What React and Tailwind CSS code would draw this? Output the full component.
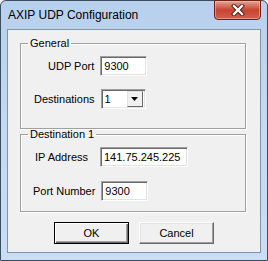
import React from 'react';

const sunken =
  "bg-white border border-t-[#a0a0a0] border-l-[#a0a0a0] border-r-white border-b-white shadow-[inset_1px_1px_0_#696969,inset_-1px_-1px_0_#e3e3e3]";

const TextBox = ({ value, width }) => (
  <div className={`${sunken} h-[20px] ${width} flex items-center pl-[3px] text-black`}>
    {value}
  </div>
);

const Button = ({ children, isDefault }) => (
  <button
    className={`w-[75px] h-[22px] bg-[#f0f0f0] text-black flex items-center justify-center ${
      isDefault
        ? 'border border-black shadow-[inset_1px_1px_0_#fff,inset_-1px_-1px_0_#696969,inset_-2px_-2px_0_#a0a0a0]'
        : 'border border-t-white border-l-white border-r-[#696969] border-b-[#696969] shadow-[inset_-1px_-1px_0_#a0a0a0,inset_1px_1px_0_#e3e3e3]'
    }`}
  >
    {children}
  </button>
);

const App = () => {
  return (
    <div className="w-[268px] h-[261px] bg-[#f0f0f0]">
      {/* Aero window frame */}
      <div className="w-[268px] h-[261px] rounded-t-[6px] border border-[#3c4d60] bg-gradient-to-b from-[#b8d0ec] via-[#c4daf2] to-[#c9ddf4] relative">
        <div className="h-[28px] flex items-center pl-[7px] text-[12px] text-black" style={{ fontFamily: '"Liberation Sans", Arial, sans-serif' }}>
          AXIP UDP Configuration
        </div>

        {/* Close button */}
        <div className="absolute top-[-1px] right-[6px] w-[47px] h-[20px] rounded-b-[4px] border border-[#6a2218] bg-gradient-to-b from-[#e3a294] via-[#c8432f] to-[#d0604c] shadow-[inset_0_0_0_1px_rgba(255,200,190,0.5)] flex items-center justify-center">
          <svg width="14" height="12" viewBox="0 0 14 12">
            <path d="M3 2 L11 10 M11 2 L3 10" stroke="#4a1a12" strokeWidth="4.2" strokeLinecap="square" />
            <path d="M3 2 L11 10 M11 2 L3 10" stroke="#ffffff" strokeWidth="2.4" strokeLinecap="square" />
          </svg>
        </div>

        {/* Client area */}
        <div
          className="ml-[6px] w-[254px] h-[224px] border border-[#7f93aa] bg-[#f0f0f0] text-[11px]"
          style={{ fontFamily: '"Liberation Sans", Arial, sans-serif' }}
        >
          <fieldset className="ml-[12px] mt-[7px] w-[226px] h-[92px] border border-[#a0a0a0] shadow-[inset_1px_1px_0_#fff,1px_1px_0_#fff] px-0">
            <legend className="ml-[7px] px-[2px] text-black leading-[13px]">General</legend>
            <div className="flex items-center mt-[6px]">
              <span className="ml-[27px] mr-[6px] text-black">UDP Port</span>
              <TextBox value="9300" width="w-[47px]" />
            </div>
            <div className="flex items-center mt-[13px]">
              <span className="ml-[13px] mr-[6px] text-black">Destinations</span>
              <div className={`${sunken} h-[20px] w-[45px] flex items-center pl-[3px] pr-[2px] text-black`}>
                <span className="flex-1">1</span>
                <div className="w-[16px] h-[16px] bg-[#f0f0f0] border border-t-[#e3e3e3] border-l-[#e3e3e3] border-r-[#696969] border-b-[#696969] flex items-center justify-center">
                  <svg width="7" height="4" viewBox="0 0 7 4">
                    <path d="M0 0 H7 L3.5 4 Z" fill="#000" />
                  </svg>
                </div>
              </div>
            </div>
          </fieldset>

          <fieldset className="ml-[12px] mt-[-1px] w-[226px] h-[84px] border border-[#a0a0a0] shadow-[inset_1px_1px_0_#fff,1px_1px_0_#fff] px-0">
            <legend className="ml-[7px] px-[2px] text-black leading-[13px]">Destination 1</legend>
            <div className="flex items-center mt-[6px]">
              <span className="ml-[14px] mr-[12px] text-black">IP Address</span>
              <TextBox value="141.75.245.225" width="w-[88px]" />
            </div>
            <div className="flex items-center mt-[14px]">
              <span className="ml-[12px] mr-[6px] text-black">Port Number</span>
              <TextBox value="9300" width="w-[47px]" />
            </div>
          </fieldset>

          <div className="flex mt-[10px] ml-[46px] gap-[10px]">
            <Button isDefault>OK</Button>
            <Button>Cancel</Button>
          </div>
        </div>
      </div>
    </div>
  );
};

export default App;
